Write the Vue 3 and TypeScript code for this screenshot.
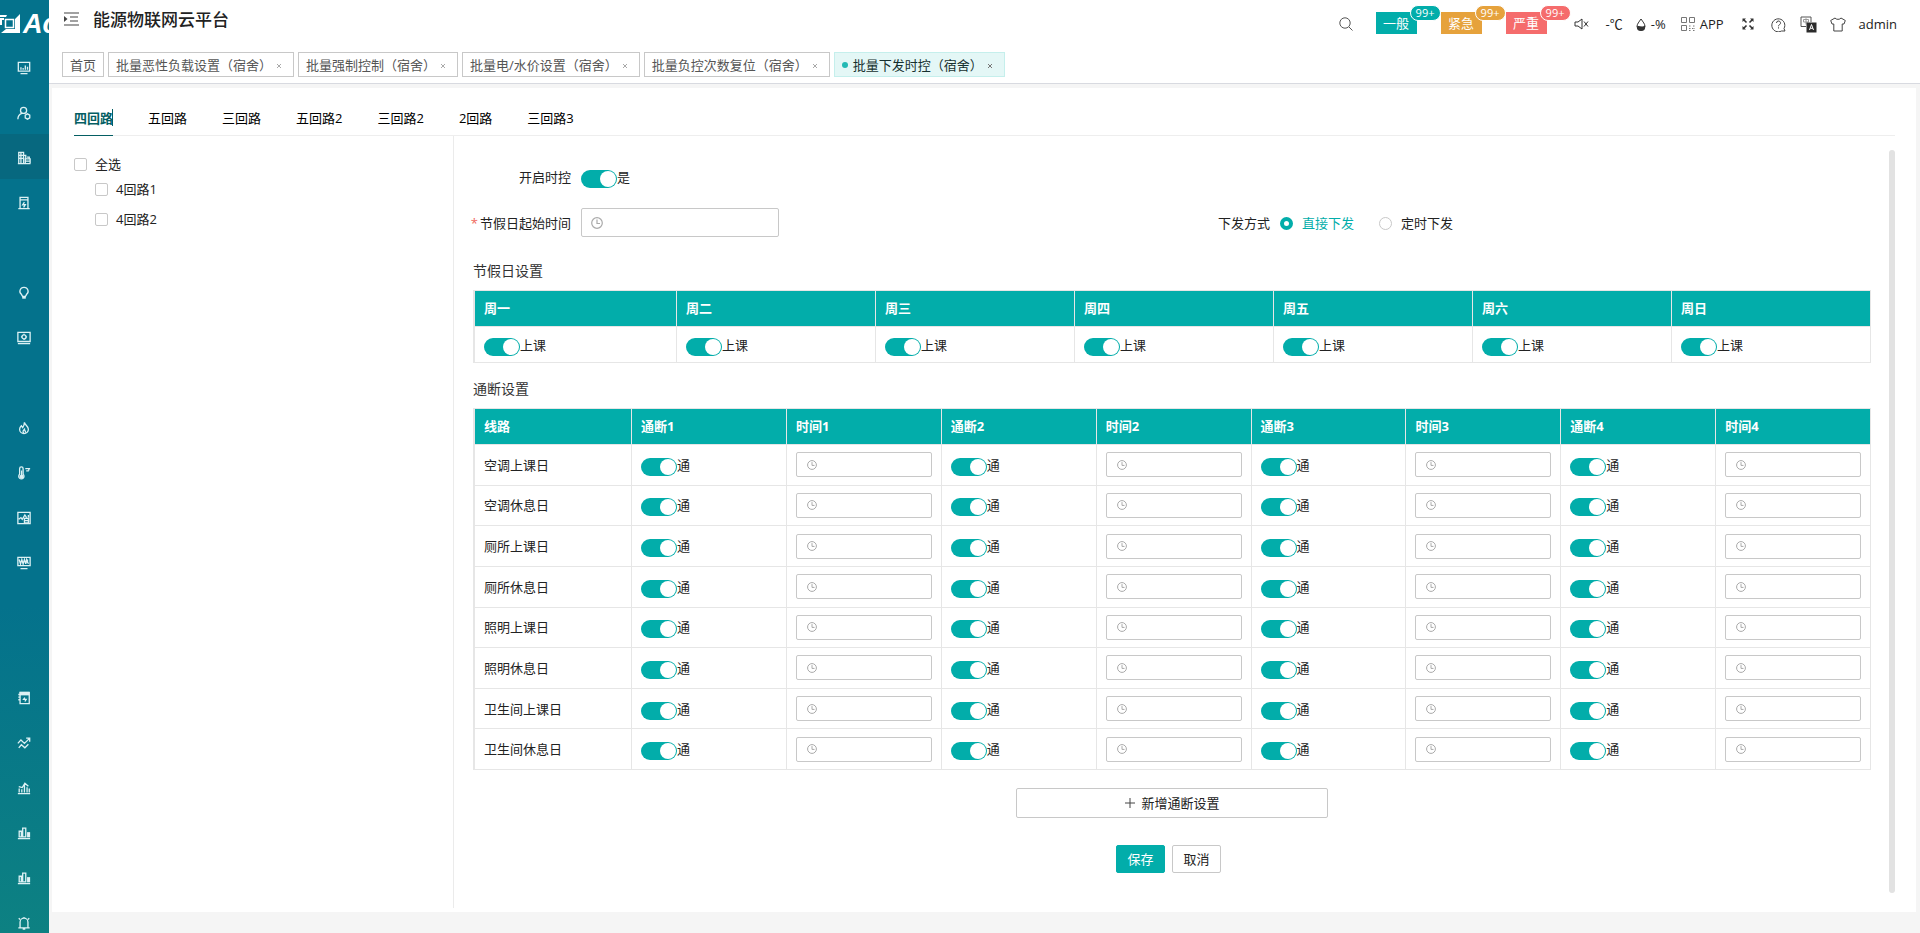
<script setup lang="ts">
import { ref } from 'vue'

interface MenuIcon {
  name: string
  line?: string
  solid?: string
}

const bars = {
  line: 'M1 14.500h14M2.500 12.500V6h2.500v6.500zM6.500 12.500v-10h3.500v10z',
  solid: 'M11.500 7h3.500v6h-3.500z',
}

const menu = ref<MenuIcon[]>([
  { name: '监控大屏', line: 'M1.500 1.500h13v10h-13zM4 14.500h8M4.500 10V7M7 10V8M9.500 10V5M12 10V6.500' },
  { name: '用户管理', line: 'M7.500 1.500a3.500 3.500 0 1 1 0 7a3.500 3.500 0 1 1 0-7zM1 15c0-3.500 2-5.500 4.500-6.500M12 9l2.600 1.500v3L12 15l-2.600-1.500v-3z' },
  { name: '宿舍管理', line: 'M2 14.500v-13h5.500v13M7.500 5H10v4M9.500 14v-5h5.500v5M1 14.500h14.500M2 5h5M2 8.500h5M4.500 2v12M9.500 11.500h5.500M11.500 7h2.500v2' },
  { name: '电表', line: 'M3.500 14V1.500h9V14M1.500 14.500h13M4 4.500h8M8.500 7l-2 3h3l-2 3' },
  { name: '' },
  { name: '照明', line: 'M8 1.500a4.500 4.500 0 0 1 3 8L9.500 12h-3L5 9.500a4.500 4.500 0 0 1 3-8z', solid: 'M6 11.500h4v3H6z' },
  { name: '设备配置', line: 'M1 1.500h14v10.500H1zM1 14.500h14M8 4.500a2.300 2.300 0 1 1 0 4.600a2.300 2.300 0 1 1 0-4.600zM8 3.200v1.300M8 9.100v1.300M4.500 6.800h1.300M10.200 6.800h1.300' },
  { name: '' },
  { name: '消防', line: 'M8.500 1.500c0 3 4.500 4 4.500 8a5 5 0 0 1-10 0c0-2 1-3 2-4l1.500 2c1-1.500 2-3 2-6zM8 14c-2-1.500-1-3 .5-4.500c0 1.500 2 2 1 4' },
  { name: '温湿度', line: 'M3 9.500V3a2 2 0 0 1 4 0v6.500a3 3 0 1 1-4 0zM9.500 3h5.500M10.500 5.500h3M13.500 2.500v2.500', solid: 'M4.500 5h1.500v5a2.300 2.300 0 1 1-1.500 0z' },
  { name: '能耗分析', line: 'M1 1.500h14v13H1zM2 9.500l2.500-2 1.500 2 3-5 2 3M8.500 8.500h4.500v5H8.500zM8.500 11h4.500M13 4.500v3' },
  { name: '波形监测', line: 'M1 1.500h14v9.500H1zM4 14.500h8M2.500 4l1.500 5L5.500 4 7 9l1.500-5L10 9l1-5 2 5M12 4v4' },
  { name: '' },
  { name: '' },
  { name: '预付费', line: 'M3.500 1.500h10.500v13H3.500zM1.500 4H3M1.500 7H3M1.500 10H3M9 7.500l-1.500 2h3l-1.500 2.500', solid: 'M3 1h11v4H3z' },
  { name: '趋势', line: 'M1 8.500l3.500-4 4 4L14 3M10.500 2.500h4v4M2 13.500l3-3.500 4 3.500 4-4' },
  { name: '统计报表', line: 'M1 14.500h14M2.500 13V8.500M5.500 13V9.500M8.500 13V3M11.500 13V7M14 13V8.500M2 6.500l4 1 3-5 4 3.500' },
  { name: '用量统计', ...bars },
  { name: '费用统计', ...bars },
  { name: '告警', line: 'M1.500 13.500h13M3.500 13V7a4.500 4.500 0 0 1 9 0v6M6.500 15h3M2 2.500l1.500 1.500M14 2.500L12.500 4M8 1v1.500' },
])
const activeMenu = '宿舍管理'

const pages = [
  '首页',
  '批量恶性负载设置（宿舍）',
  '批量强制控制（宿舍）',
  '批量电/水价设置（宿舍）',
  '批量负控次数复位（宿舍）',
  '批量下发时控（宿舍）',
]
const activePage = '批量下发时控（宿舍）'

const alarms = [
  { label: '一般', level: 'normal' },
  { label: '紧急', level: 'urgent' },
  { label: '严重', level: 'serious' },
]

const circuits = ['四回路', '五回路', '三回路', '五回路2', '三回路2', '2回路', '三回路3']
const activeCircuit = ref('四回路')
const rooms = ['4回路1', '4回路2']

const enabled = ref(true)
const mode = ref('direct')
const holiday = ref('')
const days = ref(['周一', '周二', '周三', '周四', '周五', '周六', '周日'].map((name) => ({ name, on: true })))
const slots = [1, 2, 3, 4]
const lines = ref(
  ['空调上课日', '空调休息日', '厕所上课日', '厕所休息日', '照明上课日', '照明休息日', '卫生间上课日', '卫生间休息日'].map(
    (name) => ({ name, cells: slots.map(() => ({ on: true, time: '' })) }),
  ),
)
</script>

<template>
  <div class="app">
    <aside class="side">
      <div class="logo">
        <svg viewBox="0 0 20 20" width="20" height="20" aria-hidden="true">
          <path fill="#fff" d="M0 1h7l-1 2H0zM20 0v19H1l5-4h9V5zM0 4h4v2H2v5H0z" />
          <path fill="none" stroke="#fff" stroke-width="1.500" d="M5.500 5.500h8v8h-8z" />
        </svg>
        <span>Ac</span>
      </div>
      <nav class="menu">
        <template v-for="(m, i) in menu" :key="i">
          <a v-if="m.name" href="#" class="menu-item" :class="{ active: m.name === activeMenu }" :aria-label="m.name">
            <svg viewBox="0 0 16 16" width="14" height="14">
              <path v-if="m.line" :d="m.line" fill="none" stroke="currentColor" stroke-width="1.500" />
              <path v-if="m.solid" :d="m.solid" fill="currentColor" />
            </svg>
          </a>
          <span v-else class="menu-item"></span>
        </template>
      </nav>
    </aside>

    <div class="main">
      <header class="header">
        <div class="top">
          <div class="brand">
            <button class="icon-btn" aria-label="折叠菜单">
              <svg viewBox="0 0 15 14" width="15" height="14">
                <path d="M0 1h15M6 5h8M6 9h8M0 13h15" fill="none" stroke="#444" stroke-width="1.200" />
                <path d="M0 4l3.500 3L0 10z" fill="#444" />
              </svg>
            </button>
            <h1>能源物联网云平台</h1>
          </div>
          <div class="tools">
            <button class="icon-btn search" aria-label="搜索">
              <svg viewBox="0 0 14 14" width="14" height="14" fill="none" stroke="#555">
                <circle cx="6" cy="6" r="5.200" /><path d="M10 10l3.500 3.500" />
              </svg>
            </button>
            <button v-for="a in alarms" :key="a.level" class="alarm" :class="a.level">
              {{ a.label }}<span class="badge">99+</span>
            </button>
            <button class="icon-btn mute" aria-label="静音">
              <svg viewBox="0 0 15 12" width="15" height="12" fill="none" stroke="#333">
                <path d="M1 4h3l4-3v10L4 8H1zM10 3.500l4 5M14 3.500l-4 5" />
              </svg>
            </button>
            <span class="temp">-℃</span>
            <span class="humid">
              <svg viewBox="0 0 10 13" width="10" height="13">
                <path d="M5 1C3 4 1 6 1 8.500a4 3.800 0 0 0 8 0C9 6 7 4 5 1z" fill="none" stroke="#333" />
                <path d="M1 8.500c2-1.500 5 1.500 8-1v2a4 3.500 0 0 1-8 0z" fill="#333" />
              </svg>-%</span>
            <a href="#" class="app-link">
              <svg viewBox="0 0 14 14" width="14" height="14" fill="none" stroke="#777">
                <path d="M.5 .5h5v5h-5zM8.500 .5h5v5h-5zM.5 8.500h5v5h-5z" />
                <path d="M8 9h2.500M12 9h2M8 11.500h1.500M11 11.500h3M8 13.500h2M12 13.500h2" stroke-dasharray="1.500 1" />
              </svg>APP</a>
            <button class="icon-btn full" aria-label="全屏">
              <svg viewBox="0 0 12 12" width="12" height="12">
                <path d="M1.500 1.500l3 3M10.500 1.500l-3 3M1.500 10.500l3-3M10.500 10.500l-3-3" stroke="#333" stroke-width="1.600" />
                <path d="M.5 .5h3.500L.5 4zM11.500 .5v3.500L8 .5zM.5 11.500V8L4 11.500zM11.500 11.500H8L11.500 8z" fill="#333" />
              </svg>
            </button>
            <button class="icon-btn help" aria-label="帮助">
              <svg viewBox="0 0 15 15" width="15" height="15" fill="none" stroke="#444">
                <path d="M14 14h-3.500a6.500 6.500 0 1 1 2.500-2.500z" />
                <path d="M5.500 6a2 2 0 1 1 3 1.700c-.8.500-1 .8-1 1.600M7.500 10.300v1.200" />
              </svg>
            </button>
            <button class="icon-btn lang" aria-label="切换语言">
              <svg viewBox="0 0 17 17" width="17" height="17" fill="none">
                <path d="M6 10.500H1V1h10v5" stroke="#555" />
                <path d="M3.500 3.500h5v2.500h-5zM6 2.200v6.300" stroke="#999" />
                <path d="M6.500 6.500h10v10h-10z" fill="#2b2b2b" />
                <path d="M9.500 14l2-5.500 2 5.500M10.300 12.300h2.500" stroke="#fff" />
              </svg>
            </button>
            <button class="icon-btn skin" aria-label="主题">
              <svg viewBox="0 0 16 15" width="16" height="15" fill="none" stroke="#444" stroke-linejoin="round">
                <path d="M5 1c1 1.800 5 1.800 6 0l4.300 2.500L14 7h-1.800v7H3.800V7H2L.7 3.500z" />
              </svg>
            </button>
            <a href="#" class="user">admin</a>
          </div>
        </div>
        <nav class="tags">
          <a v-for="p in pages" :key="p" href="#" class="tag" :class="{ active: p === activePage, home: p === '首页' }">
            <i v-if="p === activePage" class="dot"></i>{{ p }}
            <svg v-if="p !== '首页'" class="close" viewBox="0 0 8 8" width="8" height="8">
              <path d="M2 2l4 4M6 2L2 6" stroke="currentColor" />
            </svg>
          </a>
        </nav>
      </header>

      <main class="panel">
        <nav class="circuits">
          <a
            v-for="c in circuits"
            :key="c"
            href="#"
            :class="{ active: c === activeCircuit }"
            @click.prevent="activeCircuit = c"
          >{{ c }}</a>
        </nav>
        <div class="body">
          <section class="tree">
            <label class="root"><input type="checkbox" class="check" />全选</label>
            <label v-for="r in rooms" :key="r" class="leaf"><input type="checkbox" class="check" />{{ r }}</label>
          </section>
          <form class="form" @submit.prevent>
            <div class="row">
              <label class="label" for="enabled">开启时控</label>
              <span class="toggle"><input id="enabled" v-model="enabled" type="checkbox" role="switch" class="switch" />是</span>
            </div>
            <div class="grid">
              <div class="row">
                <label class="label" for="holiday"><b class="star">*</b>节假日起始时间</label>
                <span class="time large">
                  <svg viewBox="0 0 12 12" width="12" height="12"><circle cx="6" cy="6" r="5.300" /><path d="M6 2.500V6.500h3" /></svg>
                  <input id="holiday" v-model="holiday" type="text" />
                </span>
              </div>
              <div class="row" role="radiogroup" aria-labelledby="mode-label">
                <span id="mode-label" class="label">下发方式</span>
                <label class="radio"><input v-model="mode" type="radio" name="mode" value="direct" /><span>直接下发</span></label>
                <label class="radio"><input v-model="mode" type="radio" name="mode" value="timed" /><span>定时下发</span></label>
              </div>
            </div>

            <h2 class="first">节假日设置</h2>
            <table class="week">
              <thead>
                <tr><th v-for="d in days" :key="d.name" scope="col">{{ d.name }}</th></tr>
              </thead>
              <tbody>
                <tr>
                  <td v-for="d in days" :key="d.name">
                    <label class="toggle"><input v-model="d.on" type="checkbox" role="switch" class="switch" />上课</label>
                  </td>
                </tr>
              </tbody>
            </table>

            <h2>通断设置</h2>
            <table class="plan">
              <thead>
                <tr>
                  <th scope="col">线路</th>
                  <template v-for="s in slots" :key="s">
                    <th scope="col">通断{{ s }}</th>
                    <th scope="col">时间{{ s }}</th>
                  </template>
                </tr>
              </thead>
              <tbody>
                <tr v-for="l in lines" :key="l.name">
                  <td>{{ l.name }}</td>
                  <template v-for="(c, i) in l.cells" :key="i">
                    <td>
                      <label class="toggle"><input v-model="c.on" type="checkbox" role="switch" class="switch" />通</label>
                    </td>
                    <td>
                      <span class="time">
                        <svg viewBox="0 0 12 12" width="10" height="10"><circle cx="6" cy="6" r="5.300" /><path d="M6 2.500V6.500h3" /></svg>
                        <input v-model="c.time" type="text" :aria-label="l.name + '时间' + (i + 1)" />
                      </span>
                    </td>
                  </template>
                </tr>
              </tbody>
            </table>

            <button type="button" class="btn add">
              <svg viewBox="0 0 12 12" width="12" height="12"><path d="M6 1v10M1 6h10" stroke="#444" /></svg>新增通断设置
            </button>
            <div class="actions">
              <button type="submit" class="btn primary">保存</button>
              <button type="button" class="btn">取消</button>
            </div>
          </form>
          <div class="scrollbar"></div>
        </div>
      </main>
    </div>
  </div>
</template>

<style>
body {
  margin: 0;
}
</style>

<style scoped>
.app,
.app * {
  box-sizing: border-box;
}
.app {
  display: flex;
  height: 100vh;
  overflow: hidden;
  background: #f5f5f5;
  color: #222;
  font-family: 'Open Sans', 'Noto Sans CJK SC', sans-serif;
  font-size: 13px;
  line-height: 20px;
}
button,
input {
  margin: 0;
  font: inherit;
  color: inherit;
}
a {
  color: inherit;
  text-decoration: none;
}
svg {
  display: block;
  flex: none;
}

.side {
  flex: none;
  width: 49px;
  overflow: hidden;
  background: linear-gradient(#04728c 0%, #04728c 65%, #0d8182 100%);
  color: #dcf1f4;
}
.logo {
  display: flex;
  align-items: center;
  height: 44px;
  padding-top: 4px;
  gap: 3px;
  overflow: hidden;
}
.logo span {
  color: #fff;
  font: italic bold 27px 'Liberation Sans', sans-serif;
}
.menu-item {
  display: flex;
  align-items: center;
  justify-content: center;
  height: 45px;
  padding: 3px 1px 0 0;
}
.menu-item.active {
  background: #07687f;
}

.main {
  flex: 1;
  min-width: 0;
  display: flex;
  flex-direction: column;
}
.header {
  background: #fff;
  border-bottom: 1px solid #d8dae0;
}
.top {
  display: flex;
  justify-content: space-between;
  height: 48px;
}
.brand {
  display: flex;
  align-items: center;
  gap: 14px;
  padding: 0 0 8px 15px;
}
.brand .icon-btn {
  padding-bottom: 2px;
}
h1 {
  margin: 0;
  font-size: 17px;
  font-weight: 500;
  line-height: 24px;
}
.icon-btn {
  padding: 0;
  border: 0;
  background: none;
}
.tools {
  display: flex;
  align-items: center;
  padding-right: 23px;
}
.search {
  margin-right: 23px;
}
.alarm {
  position: relative;
  width: 41px;
  height: 22px;
  margin: 0 24px 2px 0;
  padding: 0;
  border: 0;
  color: #fff;
}
.badge {
  position: absolute;
  top: -7px;
  left: 34px;
  width: 31px;
  height: 16px;
  border: 1px solid #fff;
  border-radius: 8px;
  font-size: 11px;
  line-height: 14px;
  text-align: center;
}
.normal,
.normal .badge {
  background: #02adaa;
}
.urgent,
.urgent .badge {
  background: #e6a23c;
}
.serious,
.serious .badge {
  background: #f56c6c;
}
.mute {
  margin: 0 17px 0 3px;
}
.temp {
  margin-right: 13px;
}
.humid,
.app-link {
  display: flex;
  align-items: center;
  gap: 5px;
}
.humid {
  margin-right: 15px;
}
.full {
  margin: 0 17px 0 18px;
}
.help {
  margin-right: 14px;
}
.lang {
  margin-right: 13px;
}
.skin {
  margin-right: 13px;
}
.tags {
  display: flex;
  gap: 4px;
  padding: 4px 13px 6px;
}
.tag {
  display: flex;
  align-items: center;
  height: 25px;
  padding: 0 10px 0 7px;
  border: 1px solid #c8c8c8;
  color: #555;
  white-space: nowrap;
}
.tag.home {
  padding: 0 7px;
}
.tag.active {
  border-color: #c5efec;
  background: #e4f7f6;
  color: #16302f;
}
.dot {
  width: 6px;
  height: 6px;
  margin-right: 5px;
  border-radius: 50%;
  background: #23b9b4;
}
.close {
  margin: 3px 0 0 3px;
  color: #aaa;
}
.active .close {
  color: #777;
}

.panel {
  flex: 1;
  display: flex;
  flex-direction: column;
  min-height: 0;
  margin: 4px 4px 21px 3px;
  padding: 0 21px 4px 22px;
  background: #fff;
}
.circuits {
  display: flex;
  gap: 35px;
  padding-top: 13px;
  border-bottom: 1px solid #eee;
  color: #000;
}
.circuits a {
  position: relative;
  height: 35px;
  margin-bottom: -1px;
  line-height: 34px;
}
.circuits .active {
  border-bottom: 1px solid #045e63;
  color: #045e63;
  font-weight: 700;
}
.circuits .active::after {
  content: '';
  position: absolute;
  top: 8px;
  right: 0;
  width: 1px;
  height: 17px;
  background: #045e63;
}
.body {
  flex: 1;
  display: flex;
  min-height: 0;
}
.tree {
  flex: none;
  width: 380px;
  padding-top: 18px;
  border-right: 1px solid #ebebeb;
}
.tree label {
  display: flex;
  align-items: center;
  gap: 8px;
}
.tree .leaf {
  height: 30px;
  padding-left: 21px;
}
.check {
  appearance: none;
  width: 13px;
  height: 13px;
  border: 1px solid #c8c8c8;
  border-radius: 2px;
  background: #fff;
}

.form {
  flex: 1;
  min-width: 0;
  padding: 26px 18px 0 19px;
}
.row {
  display: flex;
  align-items: center;
  min-height: 29px;
}
.grid {
  display: grid;
  grid-template-columns: 1fr 1fr;
  margin-top: 17px;
}
.label {
  display: flex;
  justify-content: flex-end;
  width: 98px;
  margin-right: 10px;
  white-space: nowrap;
}
.star {
  margin-right: 2px;
  color: #f0675c;
  font-weight: 400;
}
.toggle {
  display: flex;
  align-items: center;
  height: 20px;
}
.switch {
  appearance: none;
  display: flex;
  justify-content: flex-start;
  width: 36px;
  height: 18px;
  margin-top: 4px;
  padding: 1px;
  border-radius: 9px;
  background: #bbb;
}
.switch::before {
  content: '';
  width: 16px;
  height: 16px;
  border-radius: 50%;
  background: #fff;
}
.switch:checked {
  justify-content: flex-end;
  background: #02adaa;
}
.time {
  display: flex;
  align-items: center;
  height: 25px;
  padding: 0 10px;
  border: 1px solid #c8c8c8;
  border-radius: 2px;
}
.time.large {
  width: 198px;
  height: 29px;
  padding: 0 9px;
}
.time svg {
  fill: none;
  stroke: #aaa;
  stroke-width: 1.2;
}
.time input {
  flex: 1;
  min-width: 0;
  height: 100%;
  padding: 0 6px;
  border: 0;
  outline: 0;
  background: none;
}
.radio {
  display: flex;
  align-items: center;
  margin-right: 25px;
}
.radio input {
  appearance: none;
  width: 13px;
  height: 13px;
  margin: 1px 9px 0 0;
  border: 1px solid #c8c8c8;
  border-radius: 50%;
}
.radio input:checked {
  border: 4px solid #02adaa;
}
.radio input:checked + span {
  color: #02adaa;
}
h2 {
  margin: 16px 0 9px;
  font-size: 14px;
  font-weight: 400;
  line-height: 20px;
  color: #333;
}
h2.first {
  margin-top: 24px;
}
table {
  width: 100%;
  table-layout: fixed;
  border-collapse: separate;
  border-spacing: 0;
  border: 1px solid #e6e6e6;
  border-width: 1px 0 0 2px;
}
.plan {
  height: 362px;
}
th,
td {
  height: 36px;
  padding: 0 9px;
  border: 1px solid #e6e6e6;
  border-width: 0 1px 1px 0;
  text-align: left;
  vertical-align: middle;
}
th {
  padding-bottom: 2px;
  background: #02adaa;
  color: #fff;
  font-weight: 700;
}
.week th:first-child {
  width: 202px;
}
.plan th:first-child {
  width: 157px;
}
.btn {
  height: 28px;
  padding: 0 8px;
  border: 1px solid #c8c8c8;
  border-radius: 2px;
  background: #fff;
  line-height: 24px;
  white-space: nowrap;
}
.add {
  display: flex;
  align-items: center;
  justify-content: center;
  gap: 5px;
  width: 312px;
  height: 30px;
  margin: 18px auto 27px;
}
.actions {
  display: flex;
  justify-content: center;
}
.actions .btn {
  width: 49px;
  margin-right: 7px;
}
.btn.primary {
  border-color: #02adaa;
  background: #02adaa;
  color: #fff;
}
.scrollbar {
  flex: none;
  width: 6px;
  margin: 14px 0 15px;
  border-radius: 3px;
  background: #e2e2e2;
}
</style>
